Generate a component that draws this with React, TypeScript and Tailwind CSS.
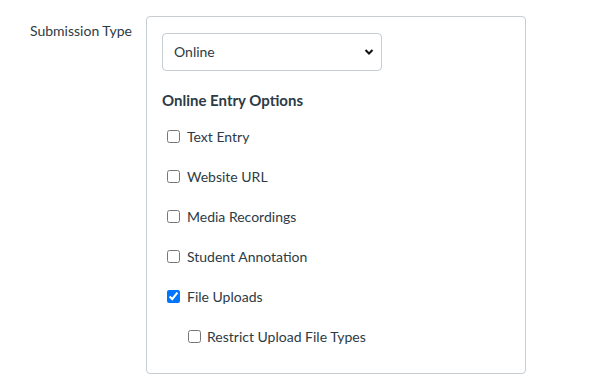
import React from "react";

const options: { label: string; checked?: boolean; nested?: boolean }[] = [
  { label: "Text Entry" },
  { label: "Website URL" },
  { label: "Media Recordings" },
  { label: "Student Annotation" },
  { label: "File Uploads", checked: true },
  { label: "Restrict Upload File Types", nested: true },
];

export default function App() {
  return (
    <div
      className="w-[594px] h-[388px] bg-white text-[#2d3b45] flex pt-4 pl-[30px]"
      style={{ fontFamily: "Lato, 'Liberation Sans', sans-serif" }}
    >
      <div className="w-[116px] text-[14px] leading-[20px] pt-[5px] text-[#2d3b45]">
        Submission Type
      </div>
      <div className="w-[380px] h-[358px] border border-[#c7cdd1] rounded-[4px] px-[15px] pt-4 pb-4 flex flex-col">
        <div className="relative w-[220px] h-[38px] border border-[#c7cdd1] rounded-[4px] flex items-center pl-[11px] pb-[2px] text-[14px]">
          <span>Online</span>
          <svg
            className="absolute right-[7px] top-[14px]"
            width="10"
            height="8"
            viewBox="0 0 10 8"
          >
            <path d="M1.5 2 L5 5.5 L8.5 2" fill="none" stroke="#111" strokeWidth="2" />
          </svg>
        </div>
        <div className="mt-[19px] text-[15px] leading-[20px] font-bold text-[#2d3b45]">
          Online Entry Options
        </div>
        <div className="mt-[6px] flex flex-col">
          {options.map((o) => (
            <label
              key={o.label}
              className={
                o.nested
                  ? "h-10 flex items-center gap-[6px] text-[14px] pl-[26px]"
                  : "h-10 flex items-center gap-[7px] text-[14px] pl-[5px]"
              }
            >
              <input
                type="checkbox"
                defaultChecked={o.checked}
                className="w-[13px] h-[13px] m-0"
              />
              <span>{o.label}</span>
            </label>
          ))}
        </div>
      </div>
    </div>
  );
}
